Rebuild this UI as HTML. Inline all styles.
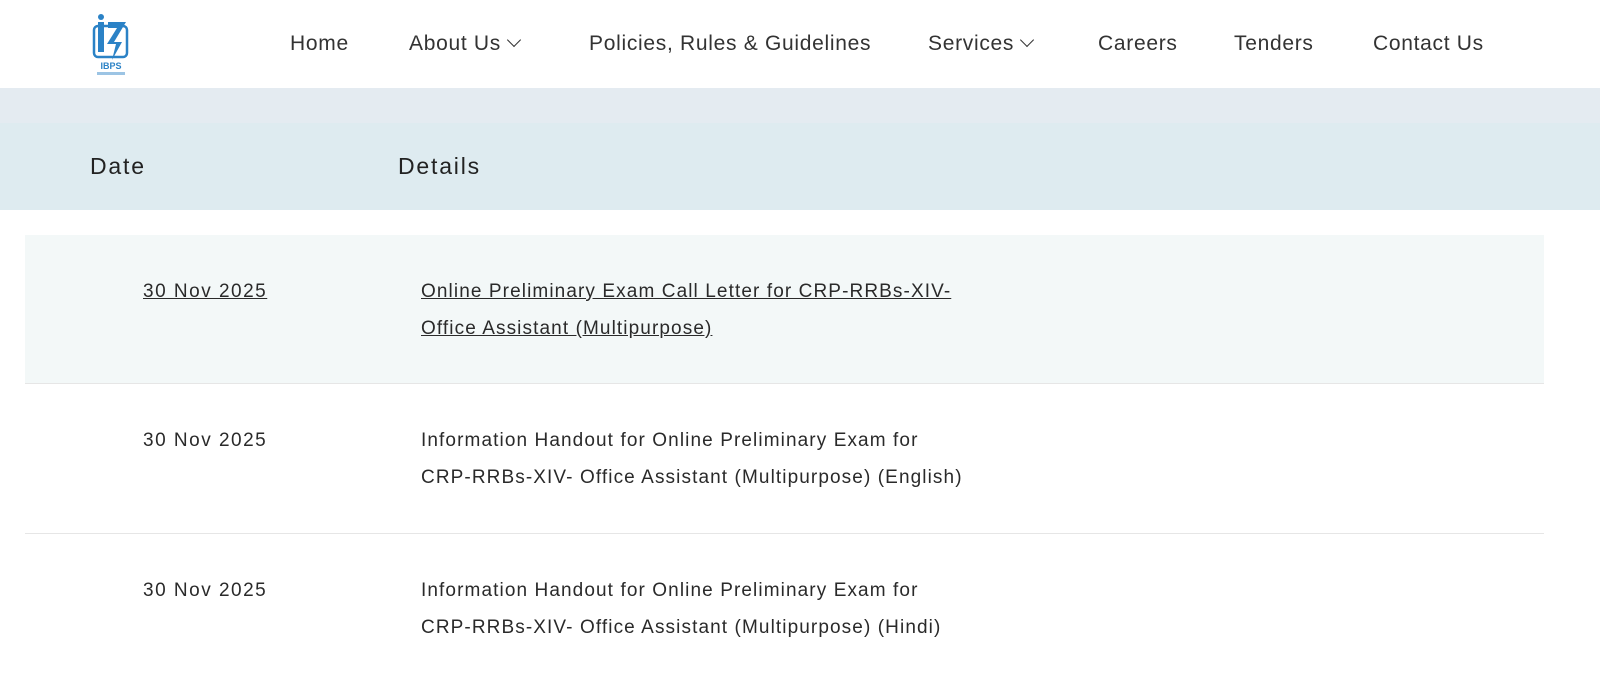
<!DOCTYPE html>
<html><head><meta charset="utf-8">
<style>
*{margin:0;padding:0;box-sizing:border-box}
body{width:1600px;height:659px;overflow:hidden;background:#fff;font-family:"Liberation Sans",sans-serif;color:#222}
.hdr{height:88px;position:relative;background:#fff}
.logo{position:absolute;left:92px;top:12px}
nav{position:absolute;top:32px;left:0;font-size:21px;color:#333;letter-spacing:0.7px}
nav span{position:absolute;white-space:nowrap}
.chev{display:inline-block;width:10px;height:10px;border-right:1.6px solid #333;border-bottom:1.6px solid #333;transform:rotate(45deg);margin-left:8px;position:relative;top:-5px}
.band1{height:35px;background:#e4ebf1}
.band2{height:87px;background:#deebf0;position:relative;font-size:23px;color:#222;letter-spacing:1.8px}
.band2 span{position:absolute;top:30px}
.row{position:absolute;left:25px;width:1519px;border-bottom:1px solid #e6e6e6;font-size:19px;color:#2a2a2a;letter-spacing:1.1px}
.row .d{position:absolute;left:118px;letter-spacing:1.5px}
.row .t{position:absolute;left:396px;line-height:37px;width:700px}
a{color:#2a2a2a}
</style></head><body>
<div class="hdr">
<svg class="logo" width="38" height="64" viewBox="0 0 38 64">
<rect x="2" y="14" width="33" height="31" rx="4" fill="none" stroke="#2b82c6" stroke-width="2.5"/>
<circle cx="9" cy="5" r="3" fill="#2b82c6"/>
<rect x="6" y="10" width="6" height="30" fill="#2b82c6"/>
<path d="M16 10 H34 L22 30 H30 L20 48 L24 32 H15 L25 16 H16 Z" fill="#2b82c6"/>
<text x="19" y="57" font-size="9" font-weight="bold" fill="#2b82c6" text-anchor="middle" font-family="Liberation Sans">IBPS</text>
<rect x="5" y="60" width="28" height="3" fill="#9cc4e4"/>
</svg>
<nav>
<span style="left:290px">Home</span>
<span style="left:409px">About Us<i class="chev"></i></span>
<span style="left:589px">Policies, Rules &amp; Guidelines</span>
<span style="left:928px">Services<i class="chev"></i></span>
<span style="left:1098px">Careers</span>
<span style="left:1234px">Tenders</span>
<span style="left:1373px">Contact Us</span>
</nav>
</div>
<div class="band1"></div>
<div class="band2"><span style="left:90px">Date</span><span style="left:398px">Details</span></div>
<div class="row" style="top:235px;height:149px;background:#f3f8f8">
<span class="d" style="top:46px"><a href="#">30 Nov 2025</a></span>
<div class="t" style="top:38px"><a href="#">Online Preliminary Exam Call Letter for CRP-RRBs-XIV-<br>Office Assistant (Multipurpose)</a></div>
</div>
<div class="row" style="top:384px;height:150px">
<span class="d" style="top:46px">30 Nov 2025</span>
<div class="t" style="top:38px">Information Handout for Online Preliminary Exam for<br>CRP-RRBs-XIV- Office Assistant (Multipurpose) (English)</div>
</div>
<div class="row" style="top:534px;height:150px;border:none">
<span class="d" style="top:46px">30 Nov 2025</span>
<div class="t" style="top:38px">Information Handout for Online Preliminary Exam for<br>CRP-RRBs-XIV- Office Assistant (Multipurpose) (Hindi)</div>
</div>
</body></html>
